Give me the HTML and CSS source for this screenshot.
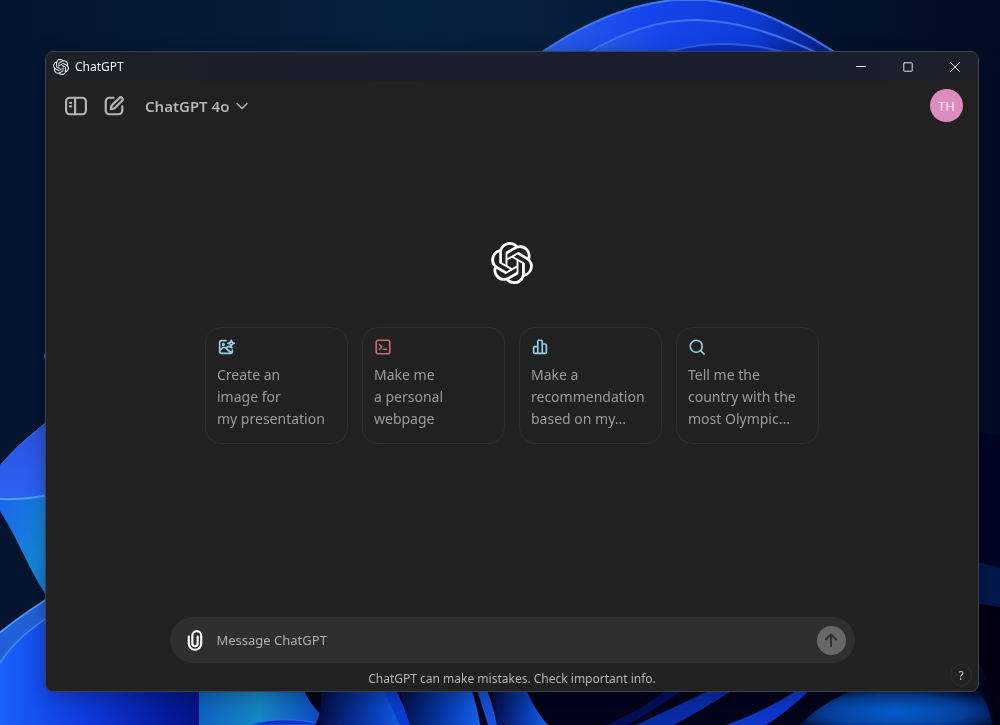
FILE: index.html
```html
<!DOCTYPE html>
<html lang="en">
<head>
<meta charset="UTF-8" />
<meta name="viewport" content="width=device-width, initial-scale=1" />
<title>ChatGPT</title>
<link rel="stylesheet" href="styles.css">
</head>
<body>

<!-- desktop wallpaper -->
<svg class="wallpaper" viewBox="0 0 1000 725" preserveAspectRatio="none" aria-hidden="true">
  <defs>
    <linearGradient id="sky" x1="0" y1="0" x2="1" y2="0">
      <stop offset="0" stop-color="#04142f" />
      <stop offset=".4" stop-color="#06203f" />
      <stop offset=".55" stop-color="#061d3e" />
      <stop offset=".85" stop-color="#02112a" />
      <stop offset="1" stop-color="#020d24" />
    </linearGradient>
    <linearGradient id="arch" x1="0" y1="0" x2="1" y2="0">
      <stop offset="0" stop-color="#2a62ee" />
      <stop offset=".35" stop-color="#1545ec" />
      <stop offset=".7" stop-color="#0f3bd8" />
      <stop offset="1" stop-color="#061c7c" />
    </linearGradient>
    <linearGradient id="petal" x1="0" y1="0" x2="0" y2="1">
      <stop offset="0" stop-color="#2b50dc" />
      <stop offset="1" stop-color="#2c62f4" />
    </linearGradient>
    <linearGradient id="leaf" x1="0" y1="0" x2="1" y2="1">
      <stop offset="0" stop-color="#1d62f0" />
      <stop offset=".6" stop-color="#1487d6" />
      <stop offset="1" stop-color="#1468e0" />
    </linearGradient>
    <linearGradient id="floor" x1="0" y1="0" x2="1" y2="0">
      <stop offset="0" stop-color="#1a62ff" />
      <stop offset=".35" stop-color="#0f3ade" />
      <stop offset=".7" stop-color="#051a9c" />
      <stop offset="1" stop-color="#030f6c" />
    </linearGradient>
    <linearGradient id="teal" x1="0" y1="0" x2="1" y2="0">
      <stop offset="0" stop-color="#0f62c0" />
      <stop offset=".45" stop-color="#1587c4" />
      <stop offset="1" stop-color="#0b3cc0" />
    </linearGradient>
    <linearGradient id="fold" x1="0" y1="0" x2="1" y2="0">
      <stop offset="0" stop-color="#020a3c" />
      <stop offset=".7" stop-color="#0a44c0" />
      <stop offset="1" stop-color="#1463e6" />
    </linearGradient>
    <radialGradient id="glow" cx=".5" cy=".7" r=".6">
      <stop offset="0" stop-color="#0560d0" />
      <stop offset=".6" stop-color="#04409c" />
      <stop offset="1" stop-color="#020a30" />
    </radialGradient>
  </defs>
  <rect width="1000" height="725" fill="url(#sky)" />

  <!-- top arch -->
  <path d="M535 57C590 18 642 0 690 -1C740 0 786 20 842 57Z" fill="url(#arch)" stroke="#3d78f2" stroke-width="2" />
  <path d="M580 57C626 30 660 20 697 20C740 21 780 35 826 57Z" fill="url(#arch)" stroke="#3d72f2" stroke-width="2" />
  <path d="M650 57C700 39 750 40 800 57Z" fill="#0a2fc0" stroke="#2c60e6" stroke-width="2" />

  <!-- left petals -->
  <circle cx="54" cy="356" r="10" fill="#2e6ea8" />
  <path d="M60 412C36 430 14 448 -2 468V500C20 500 40 498 60 492Z" fill="url(#petal)" stroke="#3c68ea" />
  <path d="M-2 499C20 500 40 498 60 492V612C34 586 22 544 -2 508Z" fill="url(#leaf)" />
  <path d="M-2 499C20 500 40 498 60 492" fill="none" stroke="#4aa4f4" stroke-width="2" />
  <path d="M-2 634C18 618 40 603 60 591H210V725H-2Z" fill="#2160d8" />
  <path d="M-2 634C18 618 40 603 60 591" fill="none" stroke="#4d98f4" stroke-width="2" />
  <path d="M-2 666C10 646 28 628 60 610H240V725H-2Z" fill="url(#floor)" />
  <path d="M-2 666C10 646 28 628 60 610" fill="none" stroke="#3b86f6" stroke-width="2" />

  <!-- folds under the window -->
  <rect x="199" y="680" width="801" height="45" fill="#01041a" />
  <path d="M199 680H300C306 700 318 714 334 725H199Z" fill="url(#teal)" />
  <path d="M250 725C270 718 300 718 322 725Z" fill="#0a34c4" stroke="#2f6cf0" />
  <path d="M315 725C322 712 322 700 322 680H372C390 694 400 710 406 725Z" fill="url(#fold)" />
  <path d="M378 680H390C400 696 406 710 410 725H400Z" fill="#0a3cd0" />
  <path d="M410 725C404 706 402 696 396 680H468C474 696 478 710 480 725Z" fill="url(#fold)" />
  <path d="M474 680H483C490 696 494 710 497 725H488Z" fill="#1450d8" />
  <path d="M497 725L490 680H522C530 700 538 714 548 725Z" fill="url(#fold)" />
  <path d="M606 725C630 714 650 704 668 688H686C664 704 642 716 628 725Z" fill="#040e58" />
  <path d="M636 725C660 714 690 700 714 688H736C712 704 690 716 674 725Z" fill="#0a2ba6" />
  <path d="M726 725C756 714 780 702 800 688H812C796 704 780 716 766 725Z" fill="#0e36c8" />
  <path d="M800 725C820 704 850 688 884 680H972C984 694 990 710 992 725Z" fill="url(#glow)" />

  <!-- right edge -->
  <path d="M970 430L1000 436V612L970 602Z" fill="#010524" />
  <path d="M970 560L1000 568V607L970 603Z" fill="#03194c" />
  <path d="M970 603L1000 607V725H994C992 690 984 664 970 650Z" fill="#00020f" />
</svg>

<svg class="defs" aria-hidden="true">
  <symbol id="openai" viewBox="0 0 24 24">
    <path fill="currentColor" d="M22.2819 9.8211a5.9847 5.9847 0 0 0-.5157-4.9108 6.0462 6.0462 0 0 0-6.5098-2.9A6.0651 6.0651 0 0 0 4.9807 4.1818a5.9847 5.9847 0 0 0-3.9977 2.9 6.0462 6.0462 0 0 0 .7427 7.0966 5.98 5.98 0 0 0 .511 4.9107 6.051 6.051 0 0 0 6.5146 2.9001A5.9847 5.9847 0 0 0 13.2599 24a6.0557 6.0557 0 0 0 5.7718-4.2058 5.9894 5.9894 0 0 0 3.9977-2.9001 6.0557 6.0557 0 0 0-.7475-7.0729zm-9.022 12.6081a4.4755 4.4755 0 0 1-2.8764-1.0408l.1419-.0804 4.7783-2.7582a.7948.7948 0 0 0 .3927-.6813v-6.7369l2.02 1.1686a.071.071 0 0 1 .038.052v5.5826a4.504 4.504 0 0 1-4.4945 4.4944zm-9.6607-4.1254a4.4708 4.4708 0 0 1-.5346-3.0137l.142.0852 4.783 2.7582a.7712.7712 0 0 0 .7806 0l5.8428-3.3685v2.3324a.0804.0804 0 0 1-.0332.0615L9.74 19.9502a4.4992 4.4992 0 0 1-6.1408-1.6464zM2.3408 7.8956a4.485 4.485 0 0 1 2.3655-1.9728V11.6a.7664.7664 0 0 0 .3879.6765l5.8144 3.3543-2.0201 1.1685a.0757.0757 0 0 1-.071 0l-4.8303-2.7865A4.504 4.504 0 0 1 2.3408 7.872zm16.5963 3.8558L13.1038 8.364 15.1192 7.2a.0757.0757 0 0 1 .071 0l4.8303 2.7913a4.4944 4.4944 0 0 1-.6765 8.1042v-5.6772a.79.79 0 0 0-.407-.667zm2.0107-3.0231l-.142-.0852-4.7735-2.7818a.7759.7759 0 0 0-.7854 0L9.409 9.2297V6.8974a.0662.0662 0 0 1 .0284-.0615l4.8303-2.7866a4.4992 4.4992 0 0 1 6.6802 4.66zM8.3065 12.863l-2.02-1.1638a.0804.0804 0 0 1-.038-.0567V6.0742a4.4992 4.4992 0 0 1 7.3757-3.4537l-.142.0805L8.704 5.459a.7948.7948 0 0 0-.3927.6813zm1.0976-2.3654l2.602-1.4998 2.6069 1.4998v2.9994l-2.5974 1.4997-2.6067-1.4997Z" />
  </symbol>
</svg>

<div class="window">
  <div class="titlebar">
    <svg class="app-icon"><use href="#openai" /></svg>
    <span class="app-name">ChatGPT</span>
    <div class="window-buttons">
      <button aria-label="Minimize"><svg viewBox="0 0 10 10"><path d="M.5 4.5h9" /></svg></button>
      <button aria-label="Maximize"><svg viewBox="0 0 10 10"><rect x=".8" y=".8" width="8.4" height="8.4" rx=".5" /></svg></button>
      <button aria-label="Close"><svg viewBox="0 0 10 10"><path d="M.6 .6l8.8 8.8M9.4 .6L.6 9.4" /></svg></button>
    </div>
  </div>

  <header class="toolbar">
    <button class="tool" aria-label="Open sidebar">
      <svg viewBox="0 0 24 24"><rect x="1.2" y="3" width="21.6" height="18" rx="4" /><path d="M11 3v18M5.500 8.500h1.200M5.500 12.500h1.200" /></svg>
    </button>
    <button class="tool" aria-label="New chat">
      <svg viewBox="0 0 24 24"><path d="M11.500 3H7a4 4 0 0 0-4 4v10a4 4 0 0 0 4 4h10a4 4 0 0 0 4-4v-4.500" /><path d="M17.800 3.200a2.100 2.100 0 0 1 3 3l-7.600 7.700c-.9.9-2.300 1.500-4.700 1.600.1-2.300.7-3.800 1.600-4.700z" /></svg>
    </button>
    <button class="model">ChatGPT 4o
      <svg viewBox="0 0 12 12"><path d="M1 3.500l5 5 5-5" /></svg>
    </button>
    <button class="avatar" aria-label="Account">TH</button>
  </header>

  <main>
    <svg class="logo"><use href="#openai" /></svg>
    <div class="cards">
      <button class="card">
        <svg class="blue" viewBox="0 0 24 24"><path d="M12 3.500H6A2.500 2.500 0 0 0 3.500 6v12A2.500 2.500 0 0 0 6 20.500h12a2.500 2.500 0 0 0 2.500-2.500v-2M4 17c3-5 6-6 9-2.500s4 4.500 7 4.500M13 12.500c2-1.500 4-1.500 7 .5M14.500 7c2.500 0 4-1 4.500-4 .5 3 1.500 4 4 4-2.500.5-3.500 1.500-4 4-.5-2.500-2-3.500-4.500-4z" /><circle cx="8.500" cy="8.500" r="1" /></svg>
        <span>Create an<br>image for<br>my presentation</span>
      </button>
      <button class="card">
        <svg class="red" viewBox="0 0 24 24"><rect x="3" y="3" width="18" height="18" rx="2.500" /><path d="M7.500 9l3 3-3 3M12.500 15h4" /></svg>
        <span>Make me<br>a personal<br>webpage</span>
      </button>
      <button class="card">
        <svg class="blue" viewBox="0 0 24 24"><path d="M9 20.500H5A1.500 1.500 0 0 1 3.500 19v-6A1.500 1.500 0 0 1 5 11.500h4zM9 20.500v-16A1.500 1.500 0 0 1 10.500 3h3A1.500 1.500 0 0 1 15 4.500v16zM15 8h4a1.500 1.500 0 0 1 1.500 1.500V19a1.500 1.500 0 0 1-1.500 1.500h-4z" /></svg>
        <span>Make a<br>recommendation<br>based on my...</span>
      </button>
      <button class="card">
        <svg class="blue" viewBox="0 0 24 24"><circle cx="11" cy="11" r="8" /><path d="M17 17l4.500 4.500" /></svg>
        <span>Tell me the<br>country with the<br>most Olympic...</span>
      </button>
    </div>
  </main>

  <footer>
    <form class="composer">
      <button type="button" class="attach" aria-label="Attach file">
        <svg viewBox="0 0 18 24"><path d="M2 8v8a7 7 0 0 0 14 0V7a5 5 0 0 0-10 0v9a3 3 0 0 0 6 0V8" /></svg>
      </button>
      <input type="text" aria-label="Message ChatGPT" placeholder="Message ChatGPT">
      <button type="button" class="send" aria-label="Send">
        <svg viewBox="0 0 16 16"><path d="M8 14V2.500M2.800 7.500L8 2.500l5.200 5" /></svg>
      </button>
    </form>
    <p class="note">ChatGPT can make mistakes. Check important info.</p>
    <button class="help" aria-label="Help">?</button>
  </footer>
</div>

</body>
</html>
```
FILE: styles.css
```css
* {
  box-sizing: border-box;
}
body {
  margin: 0; padding: 51px 21px 33px 45px; min-height: 100vh;
  display: flex; background: #04142f;
  font-family: "Noto Sans", "Open Sans", sans-serif;
}
button {
  background: none; border: none; padding: 0; color: inherit;
  font-family: inherit; cursor: pointer;
}
svg {
  display: block; fill: none; stroke-linecap: round; stroke-linejoin: round;
}
.wallpaper {
  position: fixed; inset: 0; width: 100%; height: 100%;
}
.defs {
  position: absolute; width: 0; height: 0;
}
.window {
  position: relative; flex: 1; display: flex; flex-direction: column;
  background: #212121; border: 1px solid #3a4350; border-radius: 8px;
  overflow: hidden; box-shadow: 0 4px 20px rgba(0, 0, 0, 0.3);
}

/* title bar */
.titlebar {
  display: flex; align-items: center; height: 29px; padding-left: 7px;
  background: linear-gradient(90deg, #1c2027, #1a1e2e 50%, #1a1f2e 85%, #1c2028);
  color: #f0f0f0; font-size: 12px;
}
.app-icon {
  width: 16px; height: 16px; margin-right: 6px;
}
.window-buttons {
  display: flex; margin-left: auto;
}
.window-buttons button {
  display: grid; place-items: center; width: 47px; height: 29px;
}
.window-buttons svg {
  width: 10px; height: 10px; stroke: #e4e4e4; stroke-width: 1;
}

/* toolbar */
.toolbar {
  display: flex; align-items: center; gap: 16px;
  padding: 8px 15px 8px 19px; color: #b4b4b4;
}
.tool svg {
  width: 22px; height: 22px; stroke: #b4b4b4; stroke-width: 2.4;
}
.model {
  display: flex; align-items: center; gap: 7px; margin-left: 4px;
  font-size: 15px; font-weight: 600;
}
.model svg {
  width: 12px; height: 12px; stroke: #b4b4b4; stroke-width: 1.5;
}
.avatar {
  width: 33px; height: 33px; margin-left: auto; border-radius: 50%;
  background: #dc8cbf; color: #fbeaf4; font-size: 13px;
}

/* start screen */
main {
  flex: 1; display: flex; flex-direction: column; align-items: center;
  justify-content: center; gap: 43px; padding-bottom: 62px;
}
.logo {
  width: 42px; height: 42px; color: #fff;
}
.cards {
  display: grid; grid-template-columns: repeat(4, 143px); gap: 14px;
}
.card {
  display: flex; flex-direction: column; align-items: flex-start; gap: 8px;
  padding: 10px 11px 13px; border: 1px solid #2e2e2e; border-radius: 16px;
  color: #9b9b9b; font-size: 14px; line-height: 22px; text-align: left;
  white-space: nowrap;
}
.card svg {
  width: 18px; height: 18px; stroke-width: 2.2;
}
.blue {
  stroke: #94cfe8;
}
.red {
  stroke: #cb6b77;
}

/* composer */
footer {
  display: flex; flex-direction: column; align-items: center;
}
.composer {
  display: flex; align-items: center; width: 100%; max-width: 685px;
  height: 46px; padding: 0 9px 0 17px; border-radius: 23px; background: #2f2f2f;
}
.attach svg {
  width: 16px; height: 22px; stroke: #fff; stroke-width: 2.4;
}
.composer input {
  flex: 1; min-width: 0; margin-left: 14px; padding: 0; border: none; outline: none;
  background: none; color: #ececec; font-family: inherit; font-size: 13px;
}
.composer input::placeholder {
  color: #b0b0b0; opacity: 1;
}
.send {
  display: grid; place-items: center; width: 29px; height: 29px;
  border-radius: 50%; background: #676767;
}
.send svg {
  width: 16px; height: 16px; stroke: #2f2f2f; stroke-width: 2;
}
.note {
  margin: 8px 0 4px; color: #b4b4b4; font-size: 12px; line-height: 16px;
}
.help {
  position: absolute; right: 6px; bottom: 5px; width: 22px; height: 22px;
  border: 1px solid #303030; border-radius: 50%; color: #c8c8c8; font-size: 12px;
}
```
